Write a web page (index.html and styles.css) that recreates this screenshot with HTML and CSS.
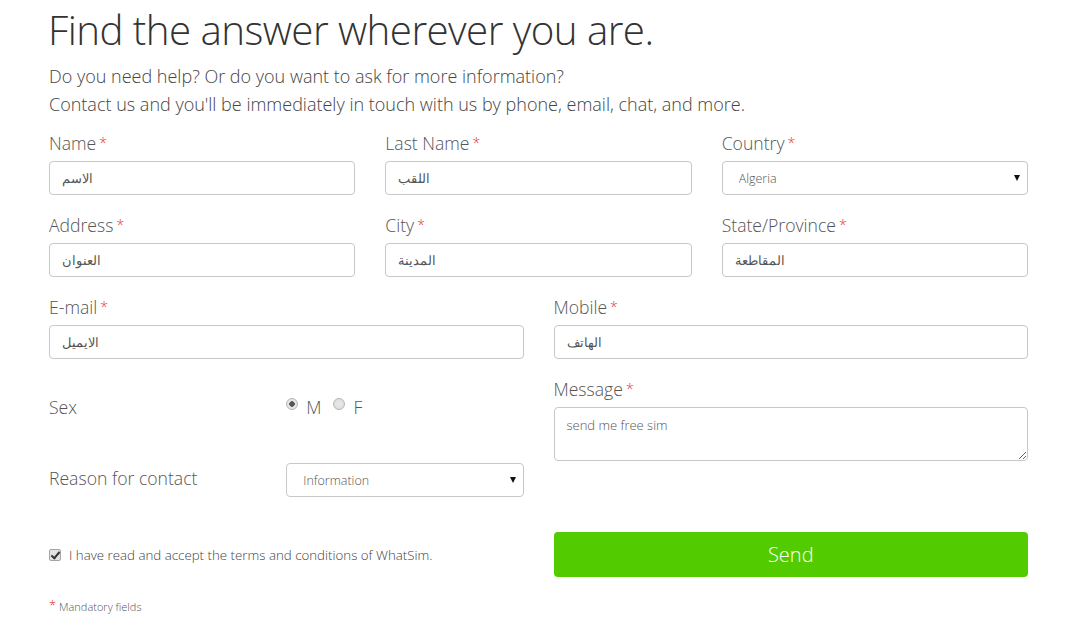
FILE: index.html
```html
<!DOCTYPE html>
<html lang="en">
<head>
<meta charset="UTF-8">
<meta name="viewport" content="width=device-width, initial-scale=1.0">
<title>Contact - WhatSim</title>
<link rel="stylesheet" href="styles.css">
</head>
<body>

<div class="page">
  <h1>Find the answer wherever you are.</h1>
  <p class="intro">Do you need help? Or do you want to ask for more information?<br>
  Contact us and you'll be immediately in touch with us by phone, email, chat, and more.</p>

  <form class="form">
    <div class="row three">
      <div class="field">
        <label for="name">Name<span class="req">*</span></label>
        <input type="text" id="name" value="الاسم">
      </div>
      <div class="field">
        <label for="lastname">Last Name<span class="req">*</span></label>
        <input type="text" id="lastname" value="اللقب">
      </div>
      <div class="field">
        <label for="country">Country<span class="req">*</span></label>
        <div class="select-wrap">
          <select id="country">
            <option>Algeria</option>
          </select>
        </div>
      </div>
    </div>

    <div class="row three">
      <div class="field">
        <label for="address">Address<span class="req">*</span></label>
        <input type="text" id="address" value="العنوان">
      </div>
      <div class="field">
        <label for="city">City<span class="req">*</span></label>
        <input type="text" id="city" value="المدينة">
      </div>
      <div class="field">
        <label for="state">State/Province<span class="req">*</span></label>
        <input type="text" id="state" value="المقاطعة">
      </div>
    </div>

    <div class="row two">
      <div class="field">
        <label for="email">E-mail<span class="req">*</span></label>
        <input type="text" id="email" value="الايميل">
      </div>
      <div class="field">
        <label for="mobile">Mobile<span class="req">*</span></label>
        <input type="text" id="mobile" value="الهاتف">
      </div>
    </div>

    <div class="row two">
      <div class="stack">
        <div class="inline-field sex">
          <span class="inline-label">Sex</span>
          <div class="radios">
            <label class="radio"><input type="radio" name="sex" checked> M</label>
            <label class="radio"><input type="radio" name="sex"> F</label>
          </div>
        </div>
        <div class="inline-field">
          <label class="inline-label reason" for="reason">Reason for contact</label>
          <div class="select-wrap">
            <select id="reason">
              <option>Information</option>
            </select>
          </div>
        </div>
      </div>
      <div class="field">
        <label for="message">Message<span class="req">*</span></label>
        <textarea id="message">send me free sim</textarea>
      </div>
    </div>

    <div class="row two bottom">
      <label class="terms"><input type="checkbox" checked> I have read and accept the terms and conditions of WhatSim.</label>
      <button type="button" class="btn-send">Send</button>
    </div>

    <p class="mandatory"><span class="req">*</span> Mandatory fields</p>
  </form>
</div>

</body>
</html>
```

FILE: styles.css
```css
  body {
    font-family: 'Open Sans', 'DejaVu Sans', sans-serif;
    font-weight: 300;
    background-color: #fff;
    color: #555;
    margin: 0;
    padding: 0;
  }
  .page {
    width: 979px;
    margin-left: 49px;
  }
  h1 {
    font-size: 40.3px;
    font-weight: 300;
    line-height: 56px;
    margin: 2px 0 0 -1px;
    color: #333;
    letter-spacing: -0.55px;
  }
  .intro {
    font-size: 18px;
    line-height: 28px;
    margin: 4px 0 0 0;
    color: #444;
  }
  .form {
    margin-top: 13px;
  }
  .row {
    display: grid;
    column-gap: 30px;
    margin-bottom: 18px;
  }
  .three {
    grid-template-columns: 1fr 1fr 1fr;
  }
  .two {
    grid-template-columns: 1fr 1fr;
  }
  .field label {
    display: block;
    font-size: 17.6px;
    line-height: 24px;
    margin-bottom: 6px;
    color: #555;
  }
  .req {
    color: #e8322f;
    font-size: 14px;
    vertical-align: 2px;
    margin-left: 3px;
  }
  input[type="text"], select, textarea {
    width: 100%;
    height: 34px;
    box-sizing: border-box;
    border: 1px solid #c8c8c8;
    border-radius: 4px;
    background: #fff;
    font-family: 'Open Sans', 'DejaVu Sans', sans-serif;
    font-weight: 300;
    font-size: 13px;
    color: #555;
    padding: 0 12px;
    margin: 0;
    outline: none;
  }
  select {
    -webkit-appearance: none;
    appearance: none;
    padding-left: 16px;
    font-size: 12.5px;
  }
  .select-wrap {
    position: relative;
  }
  .select-wrap::after {
    content: "";
    position: absolute;
    right: 8px;
    top: 14px;
    border-left: 3.5px solid transparent;
    border-right: 3.5px solid transparent;
    border-top: 6px solid #111;
    pointer-events: none;
  }
  textarea {
    height: 54px;
    padding: 8px 12px;
    resize: vertical;
    display: block;
  }
  .stack {
    padding-top: 18px;
  }
  .inline-field {
    display: grid;
    grid-template-columns: 1fr 1fr;
    align-items: center;
  }
  .inline-field.sex {
    height: 24px;
    margin-bottom: 44px;
  }
  .inline-label {
    font-size: 17.6px;
    color: #555;
  }
  .inline-label.reason {
    margin-top: -5px;
  }
  .radios {
    display: flex;
    gap: 12px;
  }
  .radio {
    font-size: 17.6px;
    color: #555;
    display: flex;
    align-items: center;
  }
  .radio input {
    -webkit-appearance: none;
    appearance: none;
    width: 12px;
    height: 12px;
    margin: -6px 8px 0 0;
    border: 1px solid #b5b5b5;
    border-radius: 50%;
    background: radial-gradient(circle, #e8e8e8 0, #dcdcdc 100%);
  }
  .radio input:checked {
    background: radial-gradient(circle, #555 0, #555 2.5px, #e6e6e6 3px);
  }
  .bottom {
    align-items: center;
    margin-top: 35px;
    margin-bottom: 0;
  }
  .terms {
    display: flex;
    align-items: center;
    font-size: 13.3px;
    color: #444;
  }
  .terms input {
    -webkit-appearance: none;
    appearance: none;
    width: 12px;
    height: 12px;
    margin: 0 8px 0 0;
    border: 1px solid #a5a5a5;
    border-radius: 2px;
    background: #e2e2e2;
    position: relative;
  }
  .terms input:checked::after {
    content: "";
    position: absolute;
    left: 3px;
    top: 0px;
    width: 3px;
    height: 7px;
    border: solid #333;
    border-width: 0 2px 2px 0;
    transform: rotate(40deg);
  }
  .btn-send {
    height: 45px;
    width: 100%;
    background-color: #52cc00;
    color: #fff;
    border: none;
    border-radius: 4px;
    font-family: 'Open Sans', sans-serif;
    font-weight: 300;
    font-size: 20px;
    cursor: pointer;
  }
  .mandatory {
    font-size: 11px;
    color: #555;
    margin: 19px 0 0 0;
  }
  .mandatory .req {
    font-size: 13px;
    vertical-align: 1px;
    margin-left: 0;
  }
```
